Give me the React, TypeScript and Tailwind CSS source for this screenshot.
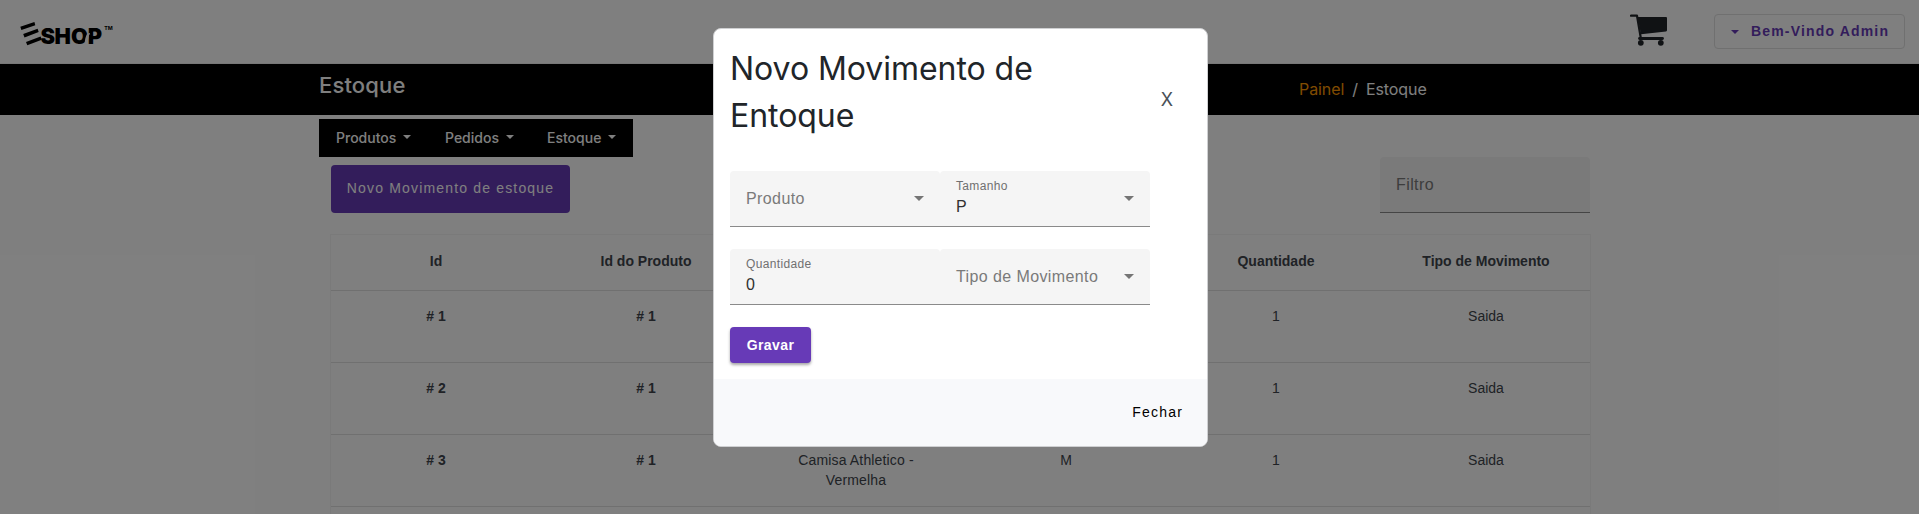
const cell = 'w-[210px] shrink-0 text-center text-[14px] leading-5';

const HEADERS = ['Id', 'Id do Produto', 'Produto', 'Tamanho', 'Quantidade', 'Tipo de Movimento'];

const ROWS = [
  { id: '# 1', product: '# 1', name: 'Camisa Athletico - Vermelha', size: 'P', amount: '1', type: 'Saida' },
  { id: '# 2', product: '# 1', name: 'Camisa Athletico - Vermelha', size: 'P', amount: '1', type: 'Saida' },
  { id: '# 3', product: '# 1', name: 'Camisa Athletico - Vermelha', size: 'M', amount: '1', type: 'Saida' },
];

function Logo() {
  return (
    <svg className="h-12 w-28" viewBox="0 0 112 48" fill="#000">
      <g transform="translate(-20 -8)">
        <path d="M20.300 26.700 34.400 22l.9 3.300L21.400 30zM23.200 34 37.600 28.800l1.100 3.300L24.500 37.400zM26 42 40.600 36.500l1.200 3.300L27.300 45.200z" />
        <text x="40.500 54.600 71 87.700" y="43.700" fontFamily="Inter, sans-serif" fontWeight="900" fontSize="21.800">SHOP</text>
        <path d="M84.600 44.200c.2-4 .8-7.600 2.600-10.400l2.400-.8.6 1.200-1.200.6c-.6 3-1.200 6.400-1.600 9.400z" fill="#fff" />
        <text x="104.300" y="30" fontFamily="Inter, sans-serif" fontWeight="700" fontSize="5" textLength="8.500" lengthAdjust="spacingAndGlyphs">TM</text>
      </g>
    </svg>
  );
}

function Cart() {
  return (
    <svg className="h-8 w-[38px]" viewBox="0 0 38 32" fill="#212529">
      <path d="M1 1.700h6L10.800 24" fill="none" stroke="#212529" strokeWidth="2.200" strokeLinecap="round" strokeLinejoin="round" />
      <path d="M7.500 3H36q1 0 1 1v12.200q0 1-1 1.200L11 20.200z" />
      <path d="M9.500 24.500h23" stroke="#212529" strokeWidth="2.800" strokeLinecap="round" />
      <circle cx="10.800" cy="28.800" r="2.900" />
      <circle cx="30.800" cy="28.800" r="2.900" />
    </svg>
  );
}

function Caret() {
  return <span className="mb-0.5 ml-[7px] h-0 w-0 border-x-4 border-t-4 border-x-transparent border-t-current" />;
}

function SelectArrow() {
  return <span className="h-0 w-0 border-x-[5px] border-t-[5px] border-x-transparent border-t-[#757575]" />;
}

function Field({ label, value, arrow }: { label: string; value?: string; arrow?: boolean }) {
  return (
    <div className="flex h-14 w-[210px] items-center justify-between rounded-t border-b border-[#8a8a8a] bg-[#f5f5f5] px-4">
      {value ? (
        <div className="-mt-px flex flex-col">
          <span className="text-[12px] leading-[14px] tracking-[0.35px] text-[#707070]">{label}</span>
          <span className="mt-1 text-[16px] leading-5 tracking-[0.4px] text-[#303030]">{value}</span>
        </div>
      ) : (
        <span className="text-[16px] leading-6 tracking-[0.4px] text-[#7a7a7a]">{label}</span>
      )}
      {arrow && <SelectArrow />}
    </div>
  );
}

export default function App() {
  return (
    <div className="relative h-[514px] w-[1919px] overflow-hidden bg-white font-['Liberation_Sans',sans-serif] text-[#212529]">
      <header className="flex h-16 items-center border-b border-[#f0f0f0] pr-[14px] pl-5">
        <Logo />
        <div className="ml-auto flex items-center">
          <div className="-mt-1 mr-[46px] flex">
            <Cart />
          </div>
          <button className="flex h-[35px] w-[191px] items-center rounded border border-[#e0e0e0] pl-4 text-[14px] font-bold tracking-[1.17px] text-[#673ab7]">
            <span className="mr-3 h-0 w-0 border-x-4 border-t-4 border-x-transparent border-t-current" />
            Bem-Vindo Admin
          </button>
        </div>
      </header>

      <div className="flex h-[51px] bg-black pl-[319px] font-[Inter,sans-serif] text-white">
        <h1 className="mt-2 w-[980px] text-[22px] leading-[27px] font-medium tracking-[0.15px]">Estoque</h1>
        <nav className="mt-[13px] flex gap-2 text-[16px] leading-6 tracking-[-0.08px]">
          <span className="text-[#ff9800]">Painel</span>
          <span>/</span>
          <span>Estoque</span>
        </nav>
      </div>

      <main className="pt-1 pl-[319px]">
        <div className="flex">
          <nav className="flex h-[38px] w-[314px] items-center bg-black pb-px pl-[17px] font-[Inter,sans-serif] text-[14px] font-medium text-white">
            <span className="flex w-[109px] items-center">Produtos<Caret /></span>
            <span className="flex w-[102px] items-center">Pedidos<Caret /></span>
            <span className="flex items-center">Estoque<Caret /></span>
          </nav>
        </div>

        <div className="flex w-[1271px] items-start justify-between pl-3">
          <button className="mt-2 h-12 w-[239px] rounded bg-[#673ab7] pb-0.5 text-[14px] tracking-[1.17px] whitespace-nowrap text-white">
            Novo Movimento de estoque
          </button>
          <div className="flex">
            <Field label="Filtro" />
          </div>
        </div>

        <div className="mt-[21px] ml-[11px] w-[1261px] border-x border-t border-[#f5f5f5] text-[#40454c]">
          <div className="flex h-14 items-center border-b border-[#e0e0e0] pb-1">
            {HEADERS.map((h) => (
              <span key={h} className={`${cell} font-bold`}>{h}</span>
            ))}
          </div>
          {ROWS.map((r) => (
            <div key={r.id} className="flex h-[72px] border-b border-[#e0e0e0] pt-[15px]">
              <span className={`${cell} font-bold`}>{r.id}</span>
              <span className={`${cell} font-bold`}>{r.product}</span>
              <span className={`${cell} px-10 tracking-[0.15px]`}>{r.name}</span>
              <span className={cell}>{r.size}</span>
              <span className={cell}>{r.amount}</span>
              <span className={cell}>{r.type}</span>
            </div>
          ))}
          <div className="h-[72px]" />
        </div>
      </main>

      <div className="absolute inset-0 bg-black/50 pt-7 pl-[713px]">
        <section role="dialog" className="flex h-[419px] w-[495px] flex-col overflow-hidden rounded-lg border border-[#cfd0d2] bg-white">
          <div className="flex items-center justify-between pt-4 pr-[34px] pl-4">
            <h2 className="w-[340px] font-[Inter,sans-serif] text-[32px] leading-[47px] tracking-[-0.05px]">Novo Movimento de Entoque</h2>
            <button className="mt-4 font-[Inter,sans-serif] text-[18px] leading-6 text-[#495057]">X</button>
          </div>
          <div className="mt-8 flex flex-col gap-[22px] pl-4">
            <div className="flex">
              <Field label="Produto" arrow />
              <Field label="Tamanho" value="P" arrow />
            </div>
            <div className="flex">
              <Field label="Quantidade" value="0" />
              <Field label="Tipo de Movimento" arrow />
            </div>
            <button className="h-9 w-[81px] rounded bg-[#673ab7] text-[14px] font-bold tracking-[0.4px] text-white shadow-[0_2px_3px_rgba(0,0,0,0.35)]">
              Gravar
            </button>
          </div>
          <footer className="mt-auto flex h-[67px] items-center justify-end bg-[#f8f9fb] pr-6">
            <button className="text-[14px] tracking-[1.2px] text-black">Fechar</button>
          </footer>
        </section>
      </div>
    </div>
  );
}
